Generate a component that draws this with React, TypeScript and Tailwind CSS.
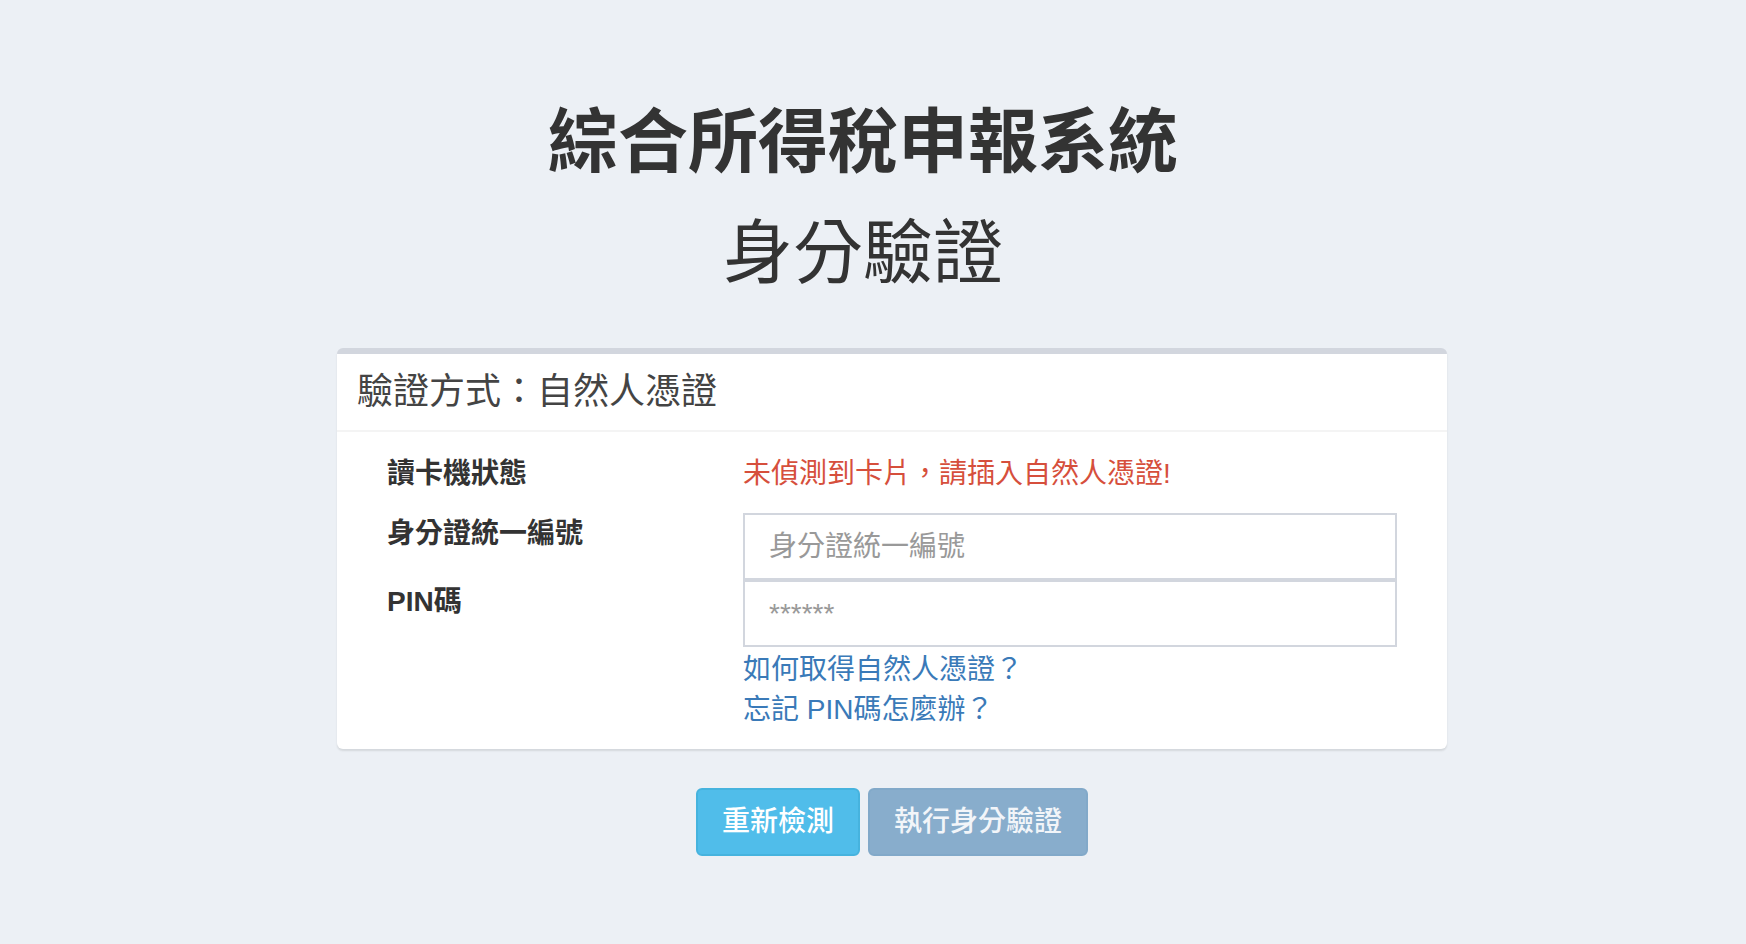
/*
 * 綜合所得稅申報系統 — 身分驗證 (自然人憑證)
 */
const FONT = { fontFamily: '"Liberation Sans", "Noto Sans CJK TC", sans-serif' };

export default function App() {
  return (
    <div className="min-h-screen bg-[#ecf0f5] text-[#333]" style={FONT}>
      <div className="flex flex-col items-center pr-[20px] pt-[108px]">
        <h1 className="text-[70px] font-bold leading-none text-[#333]">綜合所得稅申報系統</h1>
        <h2 className="mt-[41px] text-[70px] font-normal leading-none text-[#333]">身分驗證</h2>
      </div>

      <div className="flex justify-center pl-[38px]">
        <div className="w-[1110px]">
          <div className="mt-[59px] rounded-[6px] border-t-[6px] border-[#d2d6de] bg-white shadow-[0_2px_2px_rgba(0,0,0,0.1)]">
            <div className="flex h-[78px] items-center border-b-2 border-[#f4f4f4] px-[20px]">
              <h3 className="text-[36px] leading-none text-[#444]">驗證方式：自然人憑證</h3>
            </div>

            <div className="px-[50px] pt-[22px] pb-[19px] text-[28px] leading-[40px]">
              <div className="grid grid-cols-[356px_1fr]">
                <div className="font-bold text-[#333]">讀卡機狀態</div>
                <div className="text-[#d64f3c]">未偵測到卡片，請插入自然人憑證!</div>
              </div>

              <div className="mt-[19px] grid grid-cols-[356px_1fr]">
                <div className="mt-[1px] font-bold text-[#333]">身分證統一編號</div>
                <input
                  type="text"
                  placeholder="身分證統一編號"
                  className="h-[67px] w-full border-2 border-[#d2d6de] bg-white px-[24px] text-[28px] text-[#555] outline-none placeholder:text-[#999]"
                  style={FONT}
                />
              </div>

              <div className="grid grid-cols-[356px_1fr]">
                <div className="mt-[2px] font-bold text-[#333]">PIN碼</div>
                <input
                  type="password"
                  placeholder="******"
                  className="h-[67px] w-full border-2 border-[#d2d6de] bg-white px-[24px] text-[28px] text-[#555] outline-none placeholder:text-[#999]"
                  style={FONT}
                />
              </div>

              <div className="mt-[3px] grid grid-cols-[356px_1fr]">
                <div />
                <div className="flex flex-col items-start text-[#3a7ab8]">
                  <a href="#" className="hover:underline">如何取得自然人憑證？</a>
                  <a href="#" className="hover:underline">忘記 PIN碼怎麼辦？</a>
                </div>
              </div>
            </div>
          </div>

          <div className="mt-[39px] flex justify-center gap-[8px]">
            <button
              type="button"
              className="h-[68px] rounded-[6px] border-2 border-[#46b3de] bg-[#50bdea] px-[24px] text-[28px] font-medium text-white"
            >
              重新檢測
            </button>
            <button
              type="button"
              className="h-[68px] rounded-[6px] border-2 border-[#82a9c9] bg-[#88adcc] px-[24px] text-[28px] font-medium text-[#f2f5f9]"
            >
              執行身分驗證
            </button>
          </div>
        </div>
      </div>
    </div>
  );
}
